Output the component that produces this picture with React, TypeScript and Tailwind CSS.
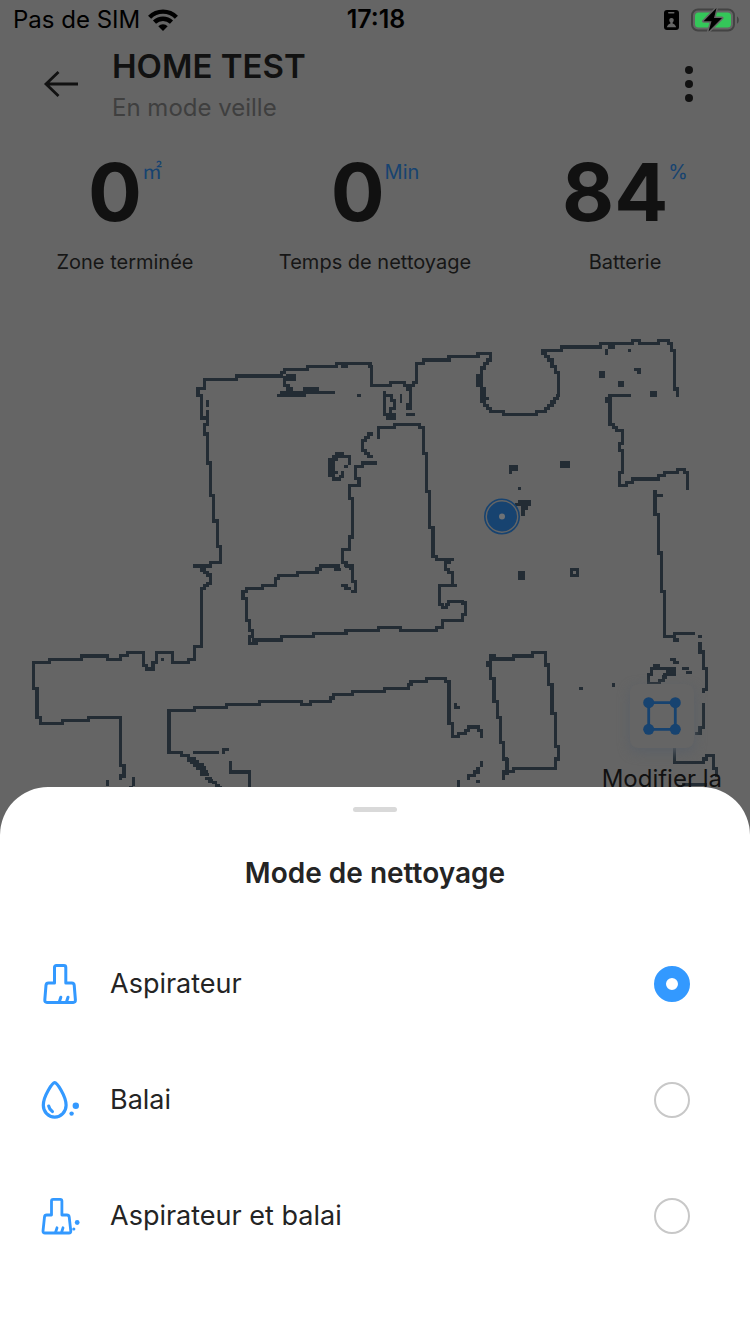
import { useState } from "react";

type Mode = "vacuum" | "mop" | "both";

const stats = [
  { value: "0", unit: "㎡", label: "Zone terminée" },
  { value: "0", unit: "Min", label: "Temps de nettoyage" },
  { value: "84", unit: "%", label: "Batterie" },
];

function WifiIcon() {
  return (
    <svg viewBox="0 0 30 22" className="h-[22px] w-[30px]" fill="none" stroke="#000" strokeWidth="4.400" aria-hidden="true">
      <path d="M1.600 8.200A19 19 0 0 1 28.400 8.200" />
      <path d="M6.500 13.200A12.200 12.200 0 0 1 23.500 13.200" />
      <path d="M15 22 10.300 17.200A6.700 6.700 0 0 1 19.700 17.200Z" fill="#000" stroke="none" />
    </svg>
  );
}

function BadgeIcon() {
  return (
    <svg viewBox="0 0 15 20" className="h-5 w-[15px]" aria-hidden="true">
      <rect width="15" height="20" rx="3" fill="#000" />
      <rect x="4" y="2" width="6.500" height="1.600" rx=".8" fill="#656565" />
      <path d="M7.500 8a2.200 2.200 0 0 1 2.200 2.500c-.1 1-.6 1.700-1.100 2.100v.8c1.600.5 3.100 1.600 3.600 3.900H2.800c.5-2.300 2-3.400 3.600-3.900v-.8c-.5-.4-1-1.100-1.100-2.100A2.200 2.200 0 0 1 7.500 8Z" fill="#656565" />
    </svg>
  );
}

function BatteryIcon() {
  return (
    <svg viewBox="0 0 48 24" className="h-6 w-12" aria-hidden="true">
      <rect x="1" y="1.500" width="42" height="21" rx="6" fill="none" stroke="#434343" strokeWidth="2" />
      <path d="M46 8.500c2.400 1.200 2.400 6 0 7.200Z" fill="#434343" />
      <rect x="4" y="4.500" width="36" height="15" rx="3.500" fill="#34c759" />
      <path d="M25.500 0 12.500 13.300h8L17.500 23.500 31 10h-8Z" fill="#000" stroke="#656565" strokeWidth="3" paintOrder="stroke" strokeLinejoin="round" />
    </svg>
  );
}

function FloorMap() {
  return (
    <svg viewBox="0 330 750 457" className="block h-auto w-full" role="img" aria-label="Carte">
      <g fill="none" stroke="#232c34" strokeWidth="10" shapeRendering="crispEdges">
        <g transform="translate(180 330) scale(.33333)">
          <path d="M53 200V176H73V148H170V138H305V127H313V118H382V109H470V101H570V109H574V166H632V157H662" />
          <path d="M57 196H64V264H82V240M82 210V230M82 260V284H73V312H82V399H91V496H101V573H112V649H121V697H91V707H40M60 715H78" />
          <path d="M313 138V166H325V177M613 183V258M613 196H634V212H643V235H632V250M595 327V292H643V283H662" />
          <path d="M578 312H565V322H556V331H547V361H556V370H565V379H578M591 399H547V409H526V446H537V466H508V505H517V621H508V658H487V697H500V709H513V720" />
          <path d="M457 380H508V405M492 409H504M487 423V440H478M465 427H474M405 717H421V707H474V720" />
          <path
            fill="#232c34"
            stroke="none"
            d="M318 132h30v21h-30zM318 171h21v12h-21zM300 183h165v9H300zM291 192h87v9h-87zM369 171h48v13h-48zM531 192h12v9h-12zM483 104h21v10h-21zM165 132h145v12H165zM48 171h12v30H48zM618 249h30v20h-30zM444 384h20v57h-20zM465 366h27v10h-27zM464 384h10v9h-10zM456 441h27v12h-27z"
          />
        </g>
        <g transform="translate(400 330) scale(.33333)">
          <path d="M0 157H13V167H41V157H49V100H71V90H147V79H234V71H271V90H262V100H253V114H244V213M257 205H267M253 210V227H262V236H271V244H310V253H409V244H436V236H445V227H454V218H463V205H472V196H475V127H466V109H456V90H445V79H436V71H427V61H484V51H542" />
          <path d="M31 170V235M0 283H58V292H70V370H79V485H88V592H99V680H110V688H162M136 690V720" />
          <path
            fill="#232c34"
            stroke="none"
            d="M18 171h17v11H18zM18 220h17v19H18zM18 249h27v9H18zM0 192h6v27H0zM228 132h17v39h-17zM240 171h17v47h-17zM449 84h13v30h-13zM449 210h13v21h-13zM327 405h27v18h-27zM327 423h9v9h-9zM480 393h30v21h-30zM354 471h9v9h-9zM354 510h39v18h-39zM345 519h15v9h-15zM363 528h21v12h-21zM363 540h12v18h-12z"
          />
        </g>
        <g transform="translate(560 330) scale(.33333)">
          <path d="M0 50H122V40H218V31H238V40H296V31H325V40H334V61H343V177H352V200" />
          <path d="M213 196H149V283H160V292H170V301H187V340H178V361H187V427H178V466H199V457H218V447H295V436H313V427H352V418H373V427H382V480M285 496H309M295 549V669H304V720" />
          <path d="M285 480V558" strokeWidth="12" />
          <path
            fill="#232c34"
            stroke="none"
            d="M0 56h9v9H0zM0 45h126v12H0zM213 441h87v12h-87zM144 192h12v96h-12zM144 44h21v12h-21zM135 57h9v18h-9zM204 57h9v9h-9zM117 123h18v21h-18zM174 153h18v18h-18zM222 114h21v9h-21zM231 114h12v18h-12zM270 183h21v18h-21zM135 201h12v18h-12z"
          />
        </g>
        <g transform="translate(20 560) scale(.33333)">
          <path d="M601 0V7H571V18H519M545 20V30H553V37H563V45H571V70H562V77H553V85H544V259H523V299H505V307H457V277H409V307H399V327H380V316H370V277H323V287H302V298H262V287H185V298H89V307H40V385H50V473H61V490H127V482H205V472H301V617H312V648H301V660" />
          <path d="M780 424H719V433H620V442H523V451H447V577H484V586H505V596H515M627 569H611V581M632 603V636H688V683" />
          <path
            fill="#232c34"
            stroke="none"
            d="M423 294h9v9h-9zM258 660h9v18h-9zM336 651h9v27h-9zM327 678h12v3h-12zM519 573h78v9h-78zM375 321h30v12h-30zM180 282h86v12h-86zM306 612h12v39h-12zM45 381h12v96H45zM441 448h12v132h-12zM628 630h65v12h-65zM501 591h26v15h-26zM510 600h27v12h-27zM519 609h33v12h-33zM528 618h30v12h-30zM540 630h24v10h-24zM540 640h27v9h-27zM555 650h21v9h-21zM564 658h15v12h-15zM575 664h15v9h-15zM584 671h15v9h-15zM595 677h11v6h-11z"
          />
        </g>
        <g transform="translate(230 540) scale(.33333)">
          <path d="M358 0V28H337V67H348V77H367V125H376V154H363M333 136H348V145H363M333 88H318V77H272V88H262V98H203V106H145V115H137V136H98V145H49V154H39V175H49V241H58V271H67V295" />
          <path d="M58 286V310H84M67 300H155V289H250V281H348V271H445V262H512V271H620V262H637V241H697V223H706V189H697V184H656V193H650V202H638V193H628V136H681M668 136V97H656V88H647V60M609 0V49H620V58H672" />
          <path d="M70 493H88V484H214V493H241V484H302V474H311V463H367V454H463V445H536V433H543V424H590V415H646V424H657V550H668V589H685V580H707V571H716V561H745V571H754V593" />
          <path
            fill="#232c34"
            stroke="none"
            d="M72 294h86v12H72zM267 72h56v11h-56zM33 150h12v30H33zM643 62h20v9h-20zM651 421h12v133h-12zM712 555h38v11h-38zM672 489h9v18h-9zM672 498h18v9h-18zM750 663h9v18h-9zM738 681h12v10h-12zM729 690h21v12h-21zM711 702h26v9h-26zM711 711h9v9h-9zM738 720h12v9h-12zM681 720h9v21h-9z"
          />
        </g>
        <g transform="translate(470 540) scale(.33333)">
          <path d="M575 80V155H584V289H614V300H627M610 281H675M690 306V336H701V385H709V448H701V459M304.500 88.500h18v18h-18z" />
          <path d="M67 357H130V348H187V337H226V375H236V434H246V521H257V619H265V657H257V685H130V695H110V657H100V608H91V532H82V485H72V415H62V345" />
          <path d="M545 385V403H535V430H568V421H580V411H592M701 489V562H690V580H675M613 618V667H701V657H709V646H731V685H740V710" />
          <path
            fill="#232c34"
            stroke="none"
            d="M144 93h21v27h-21zM684 285h12v9h-12zM684 306h12v30h-12zM57 342h21v12H57zM48 363h12v17H48zM127 342h64v12h-64zM96 690h21v15H96zM96 705h9v15h-9zM108 653h9v50h-9zM241 430h11v95h-11zM327 441h12v9h-12zM426 429h9v12h-9zM600 354h18v9h-18zM609 363h18v9h-18zM549 373h21v9h-21zM540 382h77v9h-77zM588 391h29v9h-29zM580 400h37v9h-37zM636 382h22v9h-22zM648 392h17v10h-17zM636 730h74v9h-74z"
          />
        </g>
      </g>
      <circle cx="502" cy="516.500" r="17.200" fill="#656565" stroke="#174370" strokeWidth="1.600" />
      <circle cx="502" cy="516.500" r="15" fill="#174370" />
      <circle cx="502" cy="516.500" r="3" fill="#6e7276" />
    </svg>
  );
}

function ZoneIcon() {
  return (
    <svg viewBox="0 0 40 40" className="size-10" fill="#174370" aria-hidden="true">
      <path d="M6.700 6.700H33.300V33.300H6.700Z" fill="none" stroke="#174370" strokeWidth="2.800" />
      <circle cx="6.700" cy="6.700" r="5.500" />
      <circle cx="33.300" cy="6.700" r="5.500" />
      <circle cx="6.700" cy="33.300" r="5.500" />
      <circle cx="33.300" cy="33.300" r="5.500" />
    </svg>
  );
}

function ModeIcon({ mode }: { mode: Mode }) {
  if (mode === "mop") {
    return (
      <svg viewBox="0 0 40 40" className="size-10" fill="none" stroke="#3399ff" strokeWidth="3.200" strokeLinecap="round" aria-hidden="true">
        <path d="M14.700 2.700C12.500 2.700 3.300 16 3.300 25.300a11.400 11.900 0 0 0 22.800 0C26.100 16 16.900 2.700 14.700 2.700Z" />
        <path d="M8.700 26c.4 2.300 1.500 4 3.700 5.500" />
        <circle cx="35.800" cy="25.800" r="3.200" fill="#3399ff" stroke="none" />
        <circle cx="31.600" cy="33.600" r="2.200" fill="#3399ff" stroke="none" />
      </svg>
    );
  }
  if (mode === "both") {
    return (
      <svg viewBox="0 0 40 40" className="size-10" fill="none" stroke="#3399ff" strokeWidth="2.800" strokeLinecap="round" strokeLinejoin="round" aria-hidden="true">
        <path d="M11.500 19V5q0-1.700 1.700-1.700h7q1.700 0 1.700 1.700V19h5q2 0 2.300 2l1.600 14q.2 2-1.800 2H5q-2.200 0-2-2L4.500 21q.2-2 2.200-2Z" />
        <path d="m17 31.800-1.300 4.200M23 31.800l-1.300 4.200" />
        <circle cx="37.200" cy="26.500" r="2.400" fill="#3399ff" stroke="none" />
        <circle cx="33.800" cy="33" r="1.600" fill="#3399ff" stroke="none" />
      </svg>
    );
  }
  return (
    <svg viewBox="0 0 40 40" className="size-10" fill="none" stroke="#3399ff" strokeWidth="3" strokeLinecap="round" strokeLinejoin="round" aria-hidden="true">
      <path d="M14.500 19V3.500q0-1.900 1.900-1.900h7.500q1.900 0 1.900 1.900V19h6q2.200 0 2.400 2.200l1.200 14.700q.2 2.500-2.200 2.500H7q-2.400 0-2.200-2.500L6 21.200Q6.300 19 8.500 19Z" />
      <path d="m20.800 33.200-1.600 5M28 33.200l-1.600 5" />
    </svg>
  );
}

const modes: { id: Mode; label: string }[] = [
  { id: "vacuum", label: "Aspirateur" },
  { id: "mop", label: "Balai" },
  { id: "both", label: "Aspirateur et balai" },
];

function StatusBar() {
  return (
    <div className="grid h-10 grid-cols-3 items-center pr-[11px] pl-[13px] text-2xl text-black">
      <div className="flex items-center gap-2">
        <span>Pas de SIM</span>
        <WifiIcon />
      </div>
      <span className="text-center text-[25px] font-semibold">17:18</span>
      <div className="flex items-center justify-end gap-3">
        <BadgeIcon />
        <BatteryIcon />
      </div>
    </div>
  );
}

function Header() {
  return (
    <header className="flex items-start px-10 pt-1 pb-4">
      <button type="button" aria-label="Retour" className="flex h-20 w-[72px] items-center">
        <svg viewBox="0 0 40 28" className="h-7 w-10" fill="none" stroke="#111" strokeWidth="2.800" aria-hidden="true">
          <path d="M38 14H6M18.500 2 6 14l12.500 12" />
        </svg>
      </button>
      <div className="flex-1">
        <h1 className="text-[33px] leading-[44px] font-semibold text-[#111]">HOME TEST</h1>
        <p className="text-2xl leading-10 text-[#3f3f3f]">En mode veille</p>
      </div>
      <button type="button" aria-label="Plus d'options" className="flex h-20 w-[42px] items-center justify-center">
        <svg viewBox="0 0 8 36" className="h-9 w-2" fill="#111" aria-hidden="true">
          <circle cx="4" cy="4" r="4" />
          <circle cx="4" cy="18" r="4" />
          <circle cx="4" cy="32" r="4" />
        </svg>
      </button>
    </header>
  );
}

export default function App() {
  const [selected, setSelected] = useState<Mode>("vacuum");

  return (
    <div className="flex min-h-screen flex-col bg-[#656565] font-['Inter','Noto_Sans_CJK_SC',sans-serif]">
      <StatusBar />
      <Header />
      <dl className="grid h-[186px] grid-cols-3 pt-1">
        {stats.map((s) => (
          <div key={s.label} className="flex flex-col-reverse items-center justify-end">
            <dt className="pt-3 text-xl leading-7 text-[#161616]">{s.label}</dt>
            <dd className="flex text-[#111]">
              <span className="text-[80px] leading-[88px] font-bold">{s.value}</span>
              <span className="pt-2.5 text-xl leading-7 text-[#174370]">{s.unit}</span>
            </dd>
          </div>
        ))}
      </dl>

      <div className="relative overflow-hidden">
        <FloorMap />
        <button type="button" className="absolute top-[354px] right-[28px] flex flex-col items-center gap-[15px] text-2xl leading-8 text-[#111]">
          <span className="flex size-16 items-center justify-center rounded-lg bg-[#656565] shadow-[0_4px_12px_#5b6067]">
            <ZoneIcon />
          </span>
          Modifier la
        </button>
      </div>

      <section role="dialog" aria-labelledby="mode-title" className="flex flex-1 flex-col items-center rounded-t-[48px] bg-white pt-5 pb-10 text-[#242424]">
        <span className="h-[5px] w-11 rounded-full bg-[#d9d9d9]" />
        <h2 id="mode-title" className="pt-10 pb-8 text-[28px] leading-[42px] font-semibold">
          Mode de nettoyage
        </h2>
        <div className="w-full">
          {modes.map((m) => (
            <label key={m.id} className="flex h-[116px] cursor-pointer items-center gap-[30px] pr-[60px] pl-10 text-[27px]">
              <ModeIcon mode={m.id} />
              <span className="flex-1">{m.label}</span>
              <input
                type="radio"
                name="mode"
                checked={selected === m.id}
                onChange={() => setSelected(m.id)}
                className="size-9 appearance-none rounded-full border-2 border-[#c8c8c8] bg-white checked:border-[12px] checked:border-[#3399ff]"
              />
            </label>
          ))}
        </div>
      </section>
    </div>
  );
}
